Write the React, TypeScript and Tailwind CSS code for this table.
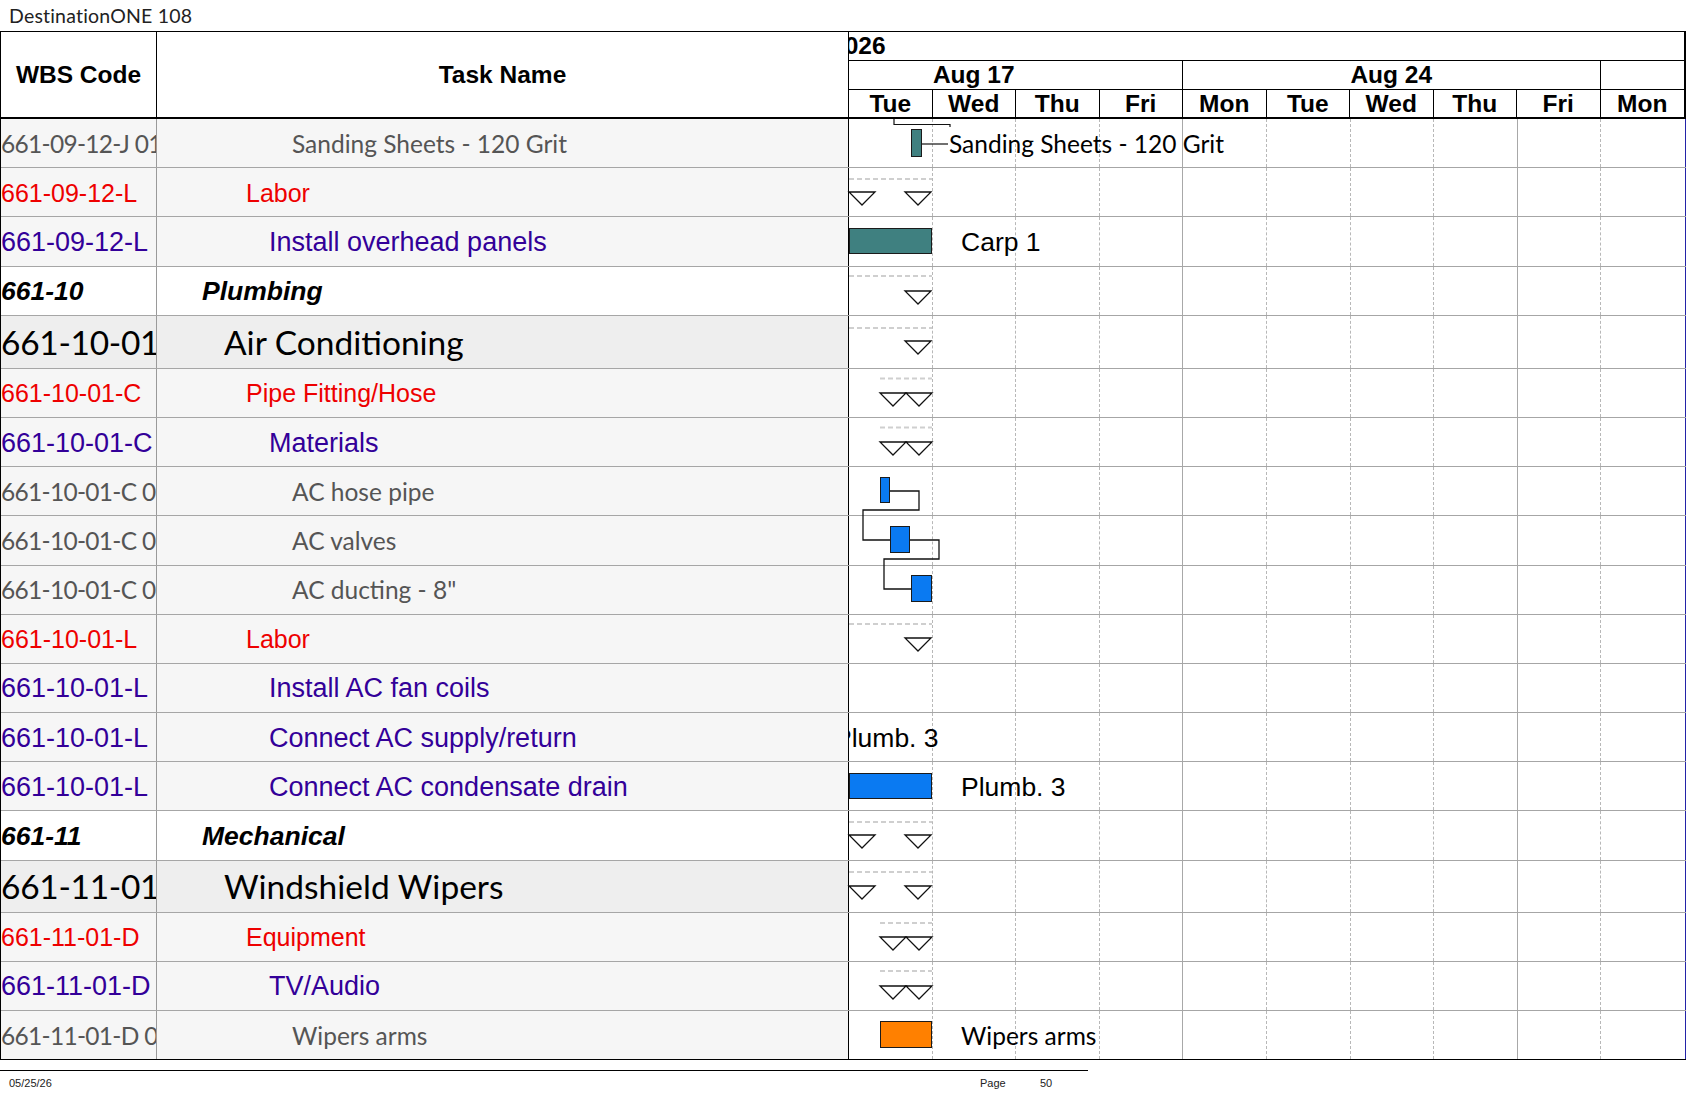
import React from 'react';

type Kind = 'gray' | 'red' | 'purple' | 'sum' | 'big';

const ARIAL = "font-['Liberation_Sans',Arial,sans-serif]";

const kindText: Record<Kind, string> = {
  gray: "font-['Lato',sans-serif] text-[24.5px] text-[#555555]",
  red: "font-['Liberation_Sans',Arial,sans-serif] text-[25px] text-[#ee0000]",
  purple: "font-['Liberation_Sans',Arial,sans-serif] text-[27px] text-[#330099]",
  sum: "font-['Liberation_Sans',Arial,sans-serif] text-[26.5px] font-bold italic text-black",
  big: "font-['Lato',sans-serif] text-[33.5px] text-black",
};

const kindWbsExtra: Record<Kind, string> = {
  gray: 'tracking-[-0.7px]',
  red: '',
  purple: '',
  sum: '',
  big: 'tracking-[-0.3px]',
};

const kindBg: Record<Kind, string> = {
  gray: 'bg-[#f6f6f6]',
  red: 'bg-[#f6f6f6]',
  purple: 'bg-[#f6f6f6]',
  sum: 'bg-white',
  big: 'bg-[#eeeeee]',
};

const kindPad: Record<Kind, string> = {
  gray: 'pl-[135px]',
  red: 'pl-[89px]',
  purple: 'pl-[112px]',
  sum: 'pl-[45px]',
  big: 'pl-[67px]',
};

type Label = { text: string; cls: string };

type Row = { wbs: string; task: string; kind: Kind; h: string; label?: Label };

const rows: Row[] = [
  {
    wbs: '661-09-12-J 01',
    task: 'Sanding Sheets - 120 Grit',
    kind: 'gray',
    h: 'h-[49.2px]',
    label: { text: 'Sanding Sheets - 120 Grit', cls: "left-[100px] font-['Lato',sans-serif] text-[24.5px]" },
  },
  { wbs: '661-09-12-L', task: 'Labor', kind: 'red', h: 'h-[49.2px]' },
  {
    wbs: '661-09-12-L',
    task: 'Install overhead panels',
    kind: 'purple',
    h: 'h-[49.2px]',
    label: { text: 'Carp 1', cls: "left-[112px] font-['Liberation_Sans',Arial,sans-serif] text-[26.5px]" },
  },
  { wbs: '661-10', task: 'Plumbing', kind: 'sum', h: 'h-[49.2px]' },
  { wbs: '661-10-01', task: 'Air Conditioning', kind: 'big', h: 'h-[53px]' },
  { wbs: '661-10-01-C', task: 'Pipe Fitting/Hose', kind: 'red', h: 'h-[49.2px]' },
  { wbs: '661-10-01-C', task: 'Materials', kind: 'purple', h: 'h-[49.2px]' },
  { wbs: '661-10-01-C 01', task: 'AC hose pipe', kind: 'gray', h: 'h-[49.2px]' },
  { wbs: '661-10-01-C 02', task: 'AC valves', kind: 'gray', h: 'h-[49.2px]' },
  { wbs: '661-10-01-C 03', task: 'AC ducting - 8"', kind: 'gray', h: 'h-[49.2px]' },
  { wbs: '661-10-01-L', task: 'Labor', kind: 'red', h: 'h-[49.2px]' },
  { wbs: '661-10-01-L', task: 'Install AC fan coils', kind: 'purple', h: 'h-[49.2px]' },
  {
    wbs: '661-10-01-L',
    task: 'Connect AC supply/return',
    kind: 'purple',
    h: 'h-[49.2px]',
    label: { text: 'Plumb. 3', cls: "left-[-15px] font-['Liberation_Sans',Arial,sans-serif] text-[26.5px]" },
  },
  {
    wbs: '661-10-01-L',
    task: 'Connect AC condensate drain',
    kind: 'purple',
    h: 'h-[49.2px]',
    label: { text: 'Plumb. 3', cls: "left-[112px] font-['Liberation_Sans',Arial,sans-serif] text-[26.5px]" },
  },
  { wbs: '661-11', task: 'Mechanical', kind: 'sum', h: 'h-[49.2px]' },
  { wbs: '661-11-01', task: 'Windshield Wipers', kind: 'big', h: 'h-[52px]' },
  { wbs: '661-11-01-D', task: 'Equipment', kind: 'red', h: 'h-[49.2px]' },
  { wbs: '661-11-01-D', task: 'TV/Audio', kind: 'purple', h: 'h-[49.2px]' },
  {
    wbs: '661-11-01-D 01',
    task: 'Wipers arms',
    kind: 'gray',
    h: 'h-[49.2px]',
    label: { text: 'Wipers arms', cls: "left-[112px] font-['Lato',sans-serif] text-[24.5px]" },
  },
];

const days = ['Tue', 'Wed', 'Thu', 'Fri', 'Mon', 'Tue', 'Wed', 'Thu', 'Fri', 'Mon'];

const dayGrid = [
  'border-r border-dashed border-[#b8b8b8]',
  'border-r border-dashed border-[#b8b8b8]',
  'border-r border-dashed border-[#b8b8b8]',
  'border-r border-solid border-[#a8a8a8]',
  'border-r border-dashed border-[#b8b8b8]',
  'border-r border-dashed border-[#b8b8b8]',
  'border-r border-dashed border-[#b8b8b8]',
  'border-r border-solid border-[#a8a8a8]',
  'border-r border-dashed border-[#b8b8b8]',
  '',
];

const tri = (x: number, y: number) => `${x},${y} ${x + 26},${y} ${x + 13},${y + 13}`;

const triangles: [number, number][] = [
  [849, 192], [905, 192],
  [905, 291],
  [905, 341],
  [880, 393], [906, 393],
  [880, 442], [906, 442],
  [905, 638],
  [849, 835], [905, 835],
  [849, 886], [905, 886],
  [880, 937], [906, 937],
  [880, 986], [906, 986],
];

const dashes: [number, number, number][] = [
  [849, 932, 179],
  [849, 932, 276],
  [849, 932, 328],
  [880, 932, 378.5],
  [880, 932, 427.5],
  [849, 932, 624],
  [849, 932, 822],
  [849, 932, 872],
  [880, 932, 923],
  [880, 932, 971],
];

const bars: { x: number; y: number; w: number; h: number; c: string }[] = [
  { x: 911, y: 129, w: 11, h: 28, c: '#3f8080' },
  { x: 849, y: 228, w: 83, h: 26, c: '#3f8080' },
  { x: 880, y: 477, w: 10, h: 26, c: '#0a7af2' },
  { x: 890, y: 526, w: 20, h: 27, c: '#0a7af2' },
  { x: 911, y: 575, w: 21, h: 27, c: '#0a7af2' },
  { x: 849, y: 773, w: 83, h: 26, c: '#0a7af2' },
  { x: 880, y: 1021, w: 52, h: 27, c: '#ff8000' },
];

function GanttOverlay() {
  return (
    <svg
      className="absolute left-0 top-0 pointer-events-none"
      width={1687}
      height={1097}
      viewBox="0 0 1687 1097"
    >
      {dashes.map(([x1, x2, y], i) => (
        <line key={'d' + i} x1={x1} x2={x2} y1={y} y2={y} stroke="#cfcfcf" strokeWidth={2} strokeDasharray="5 3" />
      ))}
      <polyline points="894,119 894,124.5 950,124.5 950,127" fill="none" stroke="#111" strokeWidth={1.2} />
      <line x1={922} x2={948} y1={144} y2={144} stroke="#111" strokeWidth={1.2} />
      <path d="M890 491 H919 V510 H863 V540 H890" fill="none" stroke="#111" strokeWidth={1.3} />
      <path d="M910 540 H939 V559 H884 V589 H911" fill="none" stroke="#111" strokeWidth={1.3} />
      {bars.map((b, i) => (
        <rect key={'b' + i} x={b.x + 0.5} y={b.y + 0.5} width={b.w - 1} height={b.h - 1} fill={b.c} stroke="#1b1b1b" strokeWidth={1} />
      ))}
      {triangles.map(([x, y], i) => (
        <polygon key={'t' + i} points={tri(x, y)} fill="white" stroke="#111" strokeWidth={1.3} />
      ))}
    </svg>
  );
}

export default function App() {
  return (
    <div className="relative w-[1687px] h-[1097px] bg-white overflow-hidden text-black">
      <div className="h-[31px] pl-[9px] flex items-center font-['Lato',sans-serif] text-[19.5px] text-[#222222] leading-none tracking-[0.2px]">
        DestinationONE 108
      </div>
      <div className="w-[1686px] border-l border-black">
        {/* header */}
        <div className="flex h-[88px] border-t border-b-2 border-black">
          <div className={`w-[156px] border-r border-black flex items-center justify-center pt-[2px] font-bold text-[24.5px] ${ARIAL}`}>
            WBS Code
          </div>
          <div className={`w-[692px] border-r border-black flex items-center justify-center pt-[2px] font-bold text-[24.5px] ${ARIAL}`}>
            Task Name
          </div>
          <div className={`w-[837px] border-r-2 border-black flex flex-col overflow-hidden font-bold text-[24.5px] leading-none ${ARIAL}`}>
            <div className="h-[29px] shrink-0 border-b border-black flex items-center">
              <span className="ml-[-18px] whitespace-nowrap">2026</span>
            </div>
            <div className="h-[29px] shrink-0 border-b border-black flex ml-[-83.5px]">
              <div className="w-[417.5px] shrink-0 border-r border-black flex items-center justify-center">Aug 17</div>
              <div className="w-[417.5px] shrink-0 border-r border-black flex items-center justify-center">Aug 24</div>
              <div className="w-[417.5px] shrink-0 border-r border-black flex items-center justify-center"></div>
            </div>
            <div className="flex-1 grid grid-cols-10">
              {days.map((d, i) => (
                <div key={i} className="border-r border-black last:border-r-0 flex items-center justify-center pt-[2px]">
                  {d}
                </div>
              ))}
            </div>
          </div>
        </div>
        {/* body */}
        <div className="flex flex-col">
          {rows.map((r, i) => (
            <div
              key={i}
              className={`flex shrink-0 ${r.h} ${i === rows.length - 1 ? 'border-b border-black' : 'border-b border-[#a6a6a6]'}`}
            >
              <div
                className={`w-[156px] shrink-0 border-r border-[#9a9a9a] overflow-hidden whitespace-nowrap flex items-center pt-[2px] leading-none ${kindBg[r.kind]} ${kindText[r.kind]} ${kindWbsExtra[r.kind]}`}
              >
                {r.wbs}
              </div>
              <div
                className={`w-[692px] shrink-0 border-r border-black overflow-hidden whitespace-nowrap flex items-center pt-[2px] leading-none ${kindBg[r.kind]} ${kindText[r.kind]} ${kindPad[r.kind]}`}
              >
                {r.task}
              </div>
              <div className="w-[837px] shrink-0 border-r border-[#2323a8] relative overflow-hidden grid grid-cols-10 bg-white">
                {dayGrid.map((c, j) => (
                  <div key={j} className={c} />
                ))}
                {r.label && (
                  <div className={`absolute top-0 bottom-0 flex items-center pt-[2px] whitespace-nowrap leading-none text-black ${r.label.cls}`}>
                    {r.label.text}
                  </div>
                )}
              </div>
            </div>
          ))}
        </div>
      </div>
      {/* footer */}
      <div className="mt-[10px] w-[1088px] border-t border-black" />
      <div className={`flex h-[24px] items-center text-[11px] text-[#222222] leading-none ${ARIAL}`}>
        <span className="pl-[9px] w-[980px] shrink-0">05/25/26</span>
        <span className="w-[60px] shrink-0">Page</span>
        <span>50</span>
      </div>
      <GanttOverlay />
    </div>
  );
}
